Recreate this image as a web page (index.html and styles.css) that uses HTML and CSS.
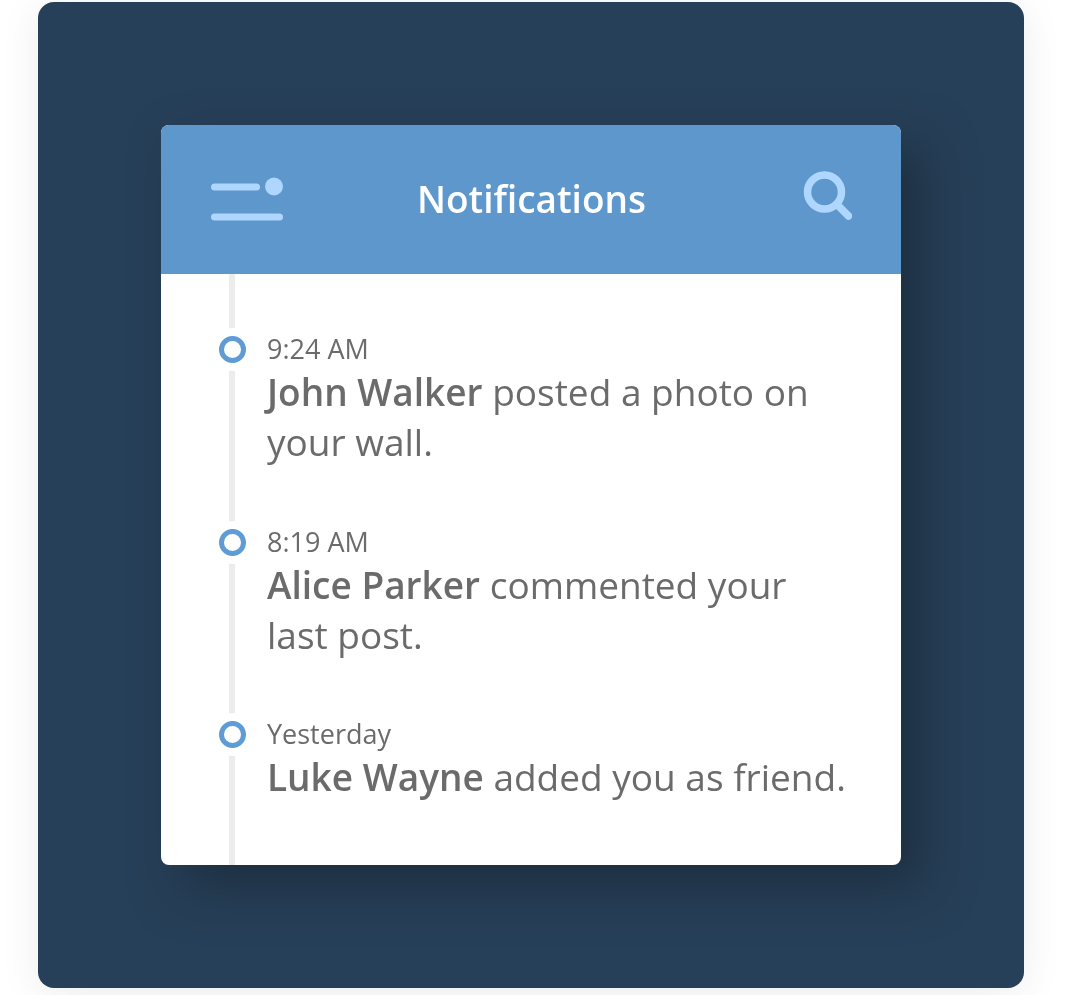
FILE: index.html
```html
<!DOCTYPE html>
<html lang="en">
<head>
    <meta charset="UTF-8">
    <meta name="viewport" content="width=device-width, initial-scale=1.0">
    <link rel="stylesheet" href="styles.css">
    <title>Notifications</title>
</head>
<body>
    <div class="panel">
        <div class="card">
            <div class="card-header">
                <svg class="menu-icon" width="72" height="40" viewBox="0 0 72 40">
                    <line x1="3.5" y1="7" x2="45.5" y2="7"></line>
                    <line x1="3.5" y1="37" x2="68.5" y2="37"></line>
                    <circle cx="63" cy="6.5" r="9"></circle>
                </svg>
                <h2>Notifications</h2>
                <svg class="search-icon" width="50" height="50" viewBox="0 0 50 50">
                    <circle cx="22.5" cy="21" r="17"></circle>
                    <line x1="35" y1="33.5" x2="46.5" y2="45"></line>
                </svg>
            </div>
            <ul class="timeline">
                <li class="event">
                    <span class="time">9:24 AM</span>
                    <p><b>John Walker</b> posted a photo on your wall.</p>
                </li>
                <li class="event">
                    <span class="time">8:19 AM</span>
                    <p><b>Alice Parker</b> commented your last post.</p>
                </li>
                <li class="event">
                    <span class="time">Yesterday</span>
                    <p><b>Luke Wayne</b> added you as friend.</p>
                </li>
            </ul>
        </div>
    </div>
</body>
</html>
```

FILE: styles.css
```css
*, *::before{
    margin:0;
    padding:0;
    box-sizing:border-box;
    font-family:'Open Sans', sans-serif;
}
body{
    height:995px;
    background-color:white;
    overflow:hidden;
    padding:2px 56px 0 38px;
}
.panel{
    height:986px;
    display:flex;
    justify-content:center;
    align-items:center;

    background-color:#274059;
    border-radius:16px;
    box-shadow:0 6px 40px rgba(0, 0, 0, 0.08);
    filter:blur(0.5px);
}
.card{
    width:740px;
    height:740px;
    overflow:hidden;

    background:white;
    border-radius:8px;
    box-shadow:22px 22px 50px rgba(20, 30, 40, 0.5);
}
.card-header{
    height:149px;
    padding:0 49px 0 50px;

    display:grid;
    grid-template-columns:1fr auto 1fr;
    align-items:center;

    background-color:#5d97cc;
}
.card-header h2{
    color:white;
    font-size:37px;
    font-weight:600;
    margin-bottom:2px;
}
.menu-icon{
    overflow:visible;
}
.menu-icon line{
    stroke:#aed6ff;
    stroke-width:7;
    stroke-linecap:round;
}
.menu-icon circle{
    fill:#aed6ff;
}
.search-icon{
    justify-self:end;
    margin-top:-7px;
}
.search-icon circle,
.search-icon line{
    fill:none;
    stroke:#aed6ff;
    stroke-width:7.5;
    stroke-linecap:round;
}
.timeline{
    list-style:none;
    height:591px;
    margin-left:68px;
    padding:56px 50px 0 32px;
    border-left:6px solid #ececec;
}
.event{
    position:relative;
    margin-bottom:55.5px;
    color:#6b6b6b;
}
.event::before{
    content:'';
    position:absolute;
    left:-48.5px;
    top:6px;
    width:27px;
    height:27px;

    background:white;
    border:5.5px solid #5f9bd5;
    border-radius:50%;
    box-shadow:0 0 0 8px white;
}
.time{
    display:block;
    font-size:27px;
    line-height:37px;
}
.event p{
    font-size:37px;
    line-height:50px;
}
.event b{
    font-weight:600;
}
```
